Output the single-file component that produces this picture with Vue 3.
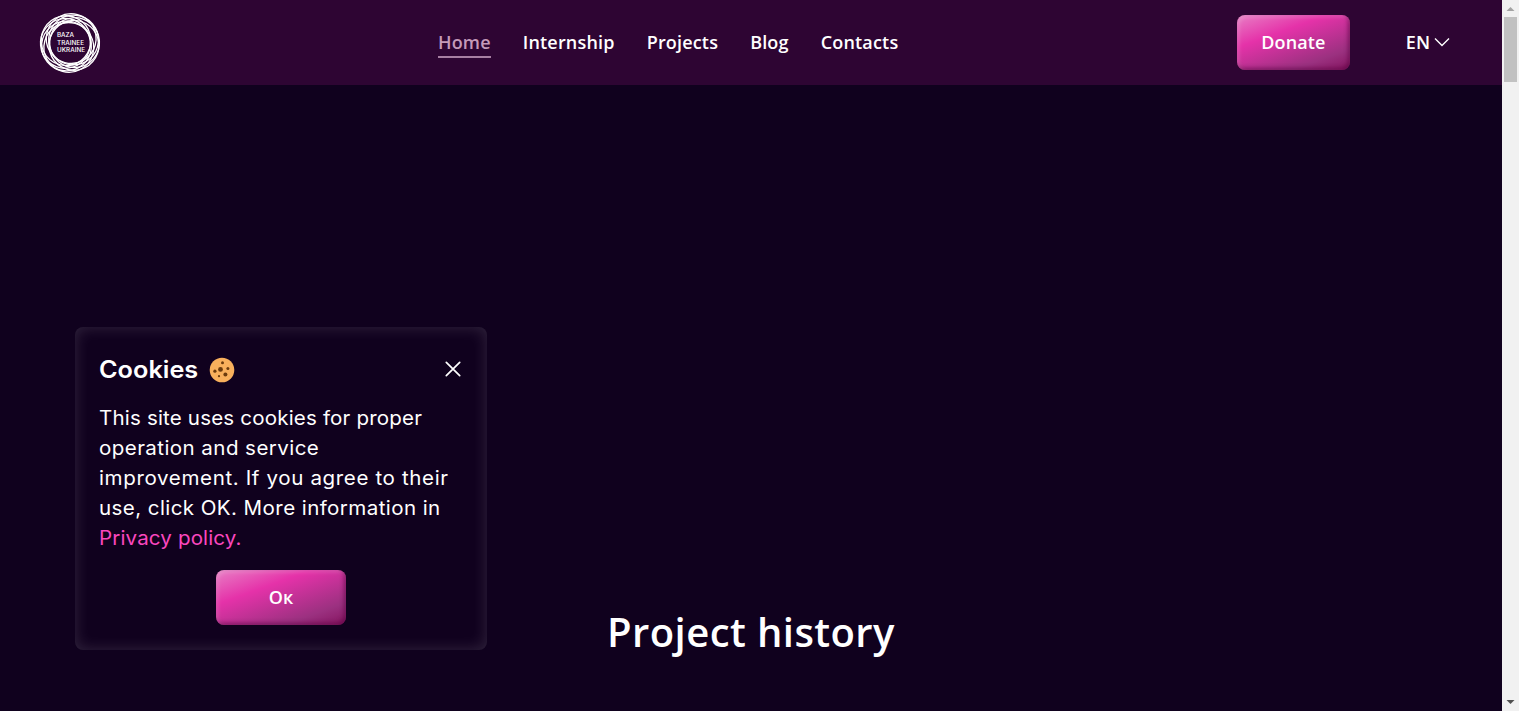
<script setup>
const links = ['Home', 'Internship', 'Projects', 'Blog', 'Contacts']
const rings = [15, 50, 85, 120, 195, 230, 265, 300]
const lines = [
  { text: 'This site uses cookies for proper', cls: 'l1' },
  { text: 'operation and service', cls: 'l2' },
  { text: 'improvement. If you agree to their', cls: 'l3' },
  { text: 'use, click OK. More information in', cls: 'l4' },
]
</script>

<template>
  <div class="window">
    <div class="page">
      <header class="header">
        <svg class="logo" viewBox="0 0 60 60" role="img" aria-label="Baza Trainee Ukraine">
          <g fill="none" stroke="#fff" stroke-width="1.3">
            <circle v-for="a in rings" :key="a" cx="30" cy="25.4" r="24.9" :transform="`rotate(${a} 30 30)`" />
          </g>
          <g class="logo-text">
            <text x="17" y="24.2" textLength="17">BAZA</text>
            <text x="17" y="31.8" textLength="27">TRAINEE</text>
            <text x="17" y="39.4" textLength="28">UKRAINE</text>
          </g>
        </svg>
        <nav class="nav">
          <a v-for="(l, i) in links" :key="l" :class="{ active: i === 0 }">{{ l }}</a>
        </nav>
        <div class="actions">
          <button class="btn donate">Donate</button>
          <div class="lang">
            <span>EN</span>
            <svg width="16" height="10" viewBox="0 0 16 10"><path d="M1 1.5 L8 8.5 L15 1.5" fill="none" stroke="#fff" stroke-width="1.4" /></svg>
          </div>
        </div>
      </header>
      <main class="main">
        <h2>Project history</h2>
      </main>
      <aside class="cookies">
        <div class="cookies-head">
          <h3><span>Cookies</span></h3>
          <svg class="cookie" width="26" height="26" viewBox="0 0 26 26">
            <circle cx="13" cy="13" r="12.3" fill="#f8b05c" />
            <g fill="#6b3b0d">
              <circle cx="13.5" cy="5.8" r="1.5" />
              <circle cx="11.5" cy="12.4" r="2.4" />
              <circle cx="18.9" cy="11.6" r="1.5" />
              <circle cx="5.9" cy="14.2" r="1.6" />
              <circle cx="16.4" cy="17.4" r="2" />
              <circle cx="10" cy="19.2" r="1.1" />
            </g>
          </svg>
          <svg class="close" width="16" height="16" viewBox="0 0 16 16"><path d="M1.3 1.3 L14.7 14.7 M14.7 1.3 L1.3 14.7" stroke="#fff" stroke-width="1.7" stroke-linecap="round" /></svg>
        </div>
        <p>
          <span v-for="l in lines" :key="l.cls" class="line" :class="l.cls">{{ l.text }}</span>
          <a class="line policy">Privacy policy.</a>
        </p>
        <button class="btn ok">Ок</button>
      </aside>
    </div>
    <div class="scrollbar">
      <svg width="17" height="17" viewBox="0 0 17 17"><path d="M4.5 11 L8.5 7 L12.5 11 Z" fill="#a3a3a3" /></svg>
      <div class="thumb"></div>
      <svg class="down" width="17" height="17" viewBox="0 0 17 17"><path d="M4.5 6 L8.5 10 L12.5 6 Z" fill="#505050" /></svg>
    </div>
  </div>
</template>

<style>
body {
  margin: 0;
  overflow: hidden;
}
</style>

<style scoped>
.window {
  display: flex;
  width: 1519px;
  height: 711px;
  overflow: hidden;
  font-family: 'Open Sans', sans-serif;
  color: #fff;
}
.page {
  position: relative;
  display: flex;
  flex-direction: column;
  width: 1502px;
  background: #10011e;
}
.header {
  display: flex;
  align-items: center;
  box-sizing: border-box;
  height: 85px;
  padding: 0 52px 0 40px;
  background: #2e0533;
}
.logo {
  width: 60px;
  height: 60px;
  overflow: visible;
}
.logo-text {
  font-family: Inter, sans-serif;
  font-size: 6.3px;
  font-weight: 500;
  fill: #fff;
}
.nav {
  display: flex;
  gap: 32px;
  margin-left: 338px;
  font-size: 18px;
  font-weight: 600;
  line-height: 27px;
  letter-spacing: 0.18px;
}
.nav a {
  border-bottom: 2px solid transparent;
  margin-top: 2px;
}
.nav a.active {
  color: #c59ab9;
  border-color: #a77fa2;
}
.actions {
  display: flex;
  align-items: center;
  gap: 56px;
  margin-left: auto;
}
.btn {
  display: block;
  height: 55px;
  padding: 0;
  border: 0;
  border-radius: 8px;
  color: #fff;
  font-family: 'Open Sans', sans-serif;
  font-size: 18px;
  font-weight: 600;
  line-height: 27px;
  background: linear-gradient(160deg, #e87fc5 0%, #e532a9 34%, #9b3180 78%, #85145f 100%);
  box-shadow: inset 2px 2px 4px rgba(255, 255, 255, 0.18), inset -2px -2px 4px rgba(90, 0, 65, 0.6);
}
.donate {
  width: 113px;
  letter-spacing: 0.1px;
}
.lang {
  display: flex;
  align-items: center;
  gap: 4px;
  font-size: 18px;
  font-weight: 600;
  line-height: 24px;
  padding-bottom: 1px;
}
.main {
  display: flex;
  justify-content: center;
  padding-top: 517px;
}
h2 {
  margin: 0;
  font-size: 40px;
  font-weight: 600;
  line-height: 60px;
  letter-spacing: 0.42px;
}
.cookies {
  position: absolute;
  left: 75px;
  top: 327px;
  box-sizing: border-box;
  width: 412px;
  height: 323px;
  padding: 25px 24px 24px;
  border-radius: 8px;
  background: #10011e;
  box-shadow: inset 0 0 16px rgba(255, 255, 255, 0.15);
  font-family: Inter, sans-serif;
}
.cookies-head {
  display: flex;
  align-items: center;
  height: 36px;
}
h3 {
  width: 110px;
  margin: 0;
  font-size: 24px;
  font-weight: 600;
  line-height: 36px;
}
h3 span {
  display: inline-block;
  transform: scaleX(1.053);
  transform-origin: left;
}
.cookie {
  margin: 0 0 1px;
}
.close {
  margin: 0 2px 3px auto;
}
p {
  margin: 15px 0 17px;
  font-size: 19.4px;
  line-height: 30px;
}
.line {
  display: block;
  width: max-content;
  white-space: nowrap;
  transform: scaleX(1.06);
  transform-origin: left;
}
.l1 {
  letter-spacing: 0.16px;
}
.l2 {
  letter-spacing: 0.4px;
}
.l3 {
  letter-spacing: 0.59px;
}
.l4 {
  letter-spacing: 0.39px;
}
.policy {
  color: #fb47bf;
  letter-spacing: 0.13px;
}
.ok {
  width: 130px;
  margin: 0 auto;
}
.scrollbar {
  display: flex;
  flex-direction: column;
  align-items: center;
  width: 17px;
  background: #f1f1f1;
}
.thumb {
  width: 13px;
  height: 65px;
  background: #c1c1c1;
}
.down {
  margin-top: auto;
}
</style>
